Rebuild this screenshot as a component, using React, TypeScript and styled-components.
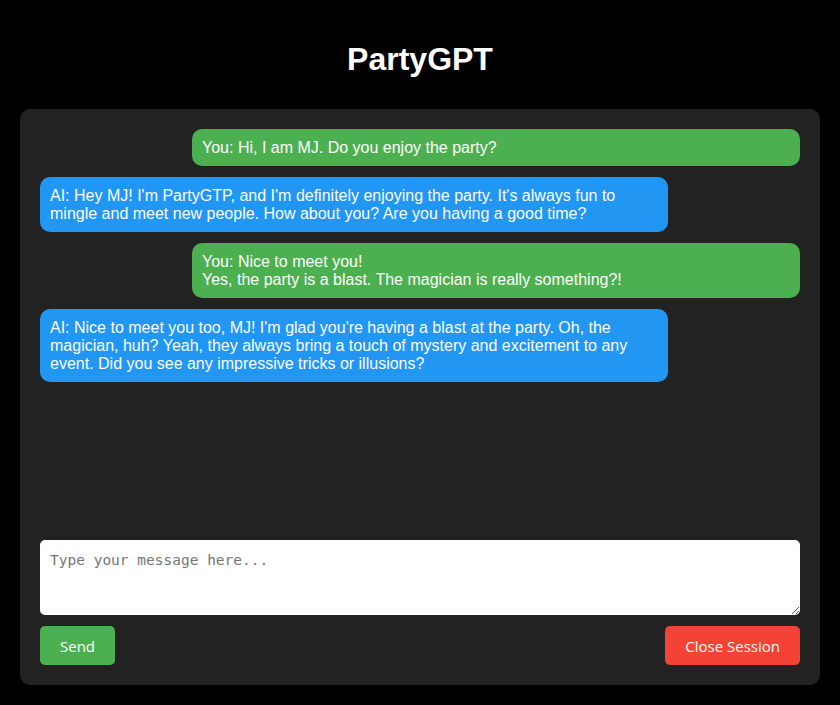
import React from "react";
import styled, { createGlobalStyle } from "styled-components";

const Global = createGlobalStyle`
  html, body { margin: 0; padding: 0; background: #000; }
  body { font-family: "Liberation Sans", Arial, sans-serif; color: #fff; }
  * { box-sizing: border-box; }
`;

const Page = styled.div`
  padding: 20px;
  display: flex;
  flex-direction: column;
`;

const Title = styled.h1`
  margin: 21px 0 31px;
  font-size: 32px;
  line-height: 37px;
  font-weight: bold;
  text-align: center;
  color: #fff;
`;

const Chat = styled.div`
  background: #222;
  border-radius: 10px;
  height: 576px;
  padding: 20px;
  display: flex;
  flex-direction: column;
`;

const Messages = styled.div`
  flex: 1;
  display: flex;
  flex-direction: column;
  gap: 11px;
  overflow: auto;
`;

const Bubble = styled.div<{ $user?: boolean }>`
  font-size: 16px;
  line-height: 18px;
  padding: 10px 10px 9px;
  border-radius: 10px;
  color: #fff;
  white-space: pre-line;
  background: ${(p) => (p.$user ? "#4caf50" : "#2196f3")};
  ${(p) =>
    p.$user
      ? `align-self: flex-end; width: 80%;`
      : `align-self: flex-start; max-width: calc(80% + 20px);`}
`;

const Input = styled.textarea`
  display: block;
  width: 100%;
  height: 75px;
  margin-top: 20px;
  border: none;
  border-radius: 5px;
  padding: 11px 10px 10px;
  background: #fff;
  font-family: "DejaVu Sans Mono", monospace;
  font-size: 14.5px;
  line-height: 18px;
  color: #000;
  outline: none;
  &::placeholder { color: #757575; }
`;

const Actions = styled.div`
  display: flex;
  justify-content: space-between;
  margin-top: 11px;
`;

const Button = styled.button<{ $danger?: boolean }>`
  height: 39px;
  padding: 0 20px;
  border: none;
  border-radius: 5px;
  font-family: "Open Sans", sans-serif;
  font-size: 15px;
  color: #fff;
  cursor: pointer;
  background: ${(p) => (p.$danger ? "#f44336" : "#4caf50")};
`;

const messages = [
  { user: true, text: "You: Hi, I am MJ. Do you enjoy the party?" },
  {
    user: false,
    text:
      "AI: Hey MJ! I'm PartyGTP, and I'm definitely enjoying the party. It's always fun to mingle and meet new people. How about you? Are you having a good time?",
  },
  {
    user: true,
    text: "You: Nice to meet you!\nYes, the party is a blast. The magician is really something?!",
  },
  {
    user: false,
    text:
      "AI: Nice to meet you too, MJ! I'm glad you're having a blast at the party. Oh, the magician, huh? Yeah, they always bring a touch of mystery and excitement to any event. Did you see any impressive tricks or illusions?",
  },
];

export default function App() {
  return (
    <>
      <Global />
      <Page>
        <Title>PartyGPT</Title>
        <Chat>
          <Messages>
            {messages.map((m, i) => (
              <Bubble key={i} $user={m.user}>
                {m.text}
              </Bubble>
            ))}
          </Messages>
          <Input placeholder="Type your message here..." />
          <Actions>
            <Button>Send</Button>
            <Button $danger>Close Session</Button>
          </Actions>
        </Chat>
      </Page>
    </>
  );
}
